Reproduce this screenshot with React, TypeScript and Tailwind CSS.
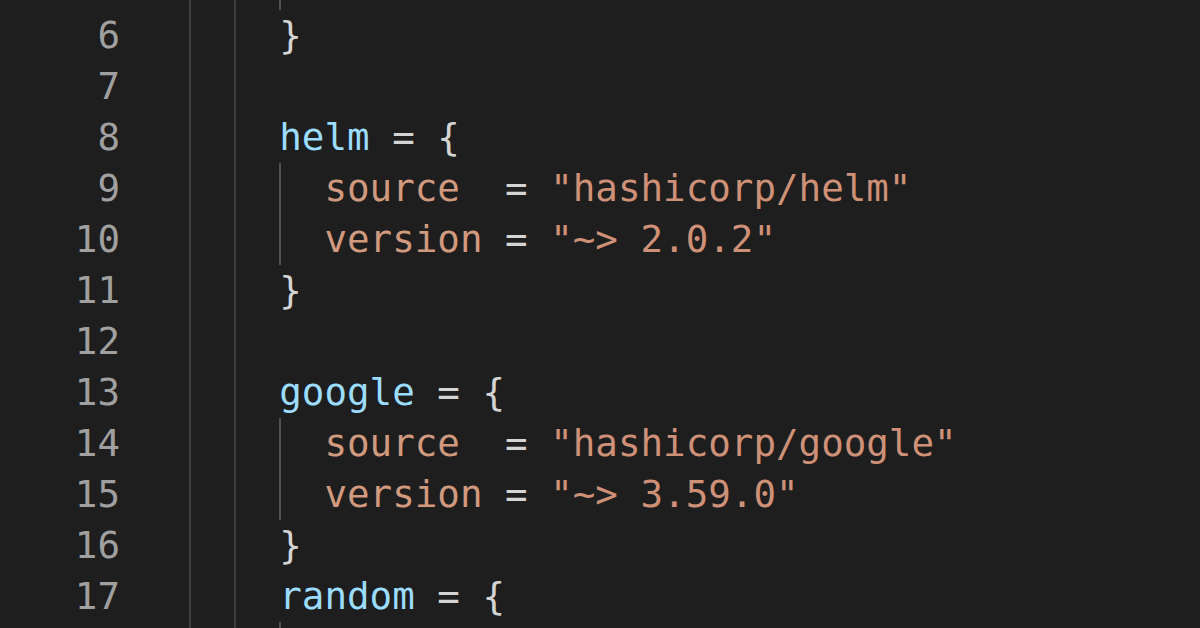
type Tok = { t: string; c: string };

const KEY = "text-[#9cdcfe]";
const ATTR = "text-[#d19a7f]";
const STR = "text-[#ce9178]";
const PUN = "text-[#d4d4d4]";

type Line = { n: number; guides: number; toks: Tok[] };

// line 5 and 18 only show their indent guides, the text is scrolled out of view
const lines: Line[] = [
  { n: 5, guides: 3, toks: [] },
  { n: 6, guides: 2, toks: [{ t: "}", c: PUN }] },
  { n: 7, guides: 2, toks: [] },
  {
    n: 8,
    guides: 2,
    toks: [
      { t: "helm", c: KEY },
      { t: " = {", c: PUN },
    ],
  },
  {
    n: 9,
    guides: 3,
    toks: [
      { t: "source", c: ATTR },
      { t: "  = ", c: PUN },
      { t: '"hashicorp/helm"', c: STR },
    ],
  },
  {
    n: 10,
    guides: 3,
    toks: [
      { t: "version", c: ATTR },
      { t: " = ", c: PUN },
      { t: '"~> 2.0.2"', c: STR },
    ],
  },
  { n: 11, guides: 2, toks: [{ t: "}", c: PUN }] },
  { n: 12, guides: 2, toks: [] },
  {
    n: 13,
    guides: 2,
    toks: [
      { t: "google", c: KEY },
      { t: " = {", c: PUN },
    ],
  },
  {
    n: 14,
    guides: 3,
    toks: [
      { t: "source", c: ATTR },
      { t: "  = ", c: PUN },
      { t: '"hashicorp/google"', c: STR },
    ],
  },
  {
    n: 15,
    guides: 3,
    toks: [
      { t: "version", c: ATTR },
      { t: " = ", c: PUN },
      { t: '"~> 3.59.0"', c: STR },
    ],
  },
  { n: 16, guides: 2, toks: [{ t: "}", c: PUN }] },
  {
    n: 17,
    guides: 2,
    toks: [
      { t: "random", c: KEY },
      { t: " = {", c: PUN },
    ],
  },
  { n: 18, guides: 3, toks: [] },
];

const CodeLine = ({ line, showNum }: { line: Line; showNum: boolean }) => {
  return (
    <div className="flex h-[51px] leading-[51px]">
      <div className="w-[120px] shrink-0 text-right text-[#a0a0a0]">{showNum ? line.n : ""}</div>
      <div className="ml-[69px] flex whitespace-pre">
        {Array.from({ length: line.guides }).map((_, i) => (
          <span
            key={i}
            className={
              i < 2
                ? "w-[2ch] shrink-0 self-stretch border-l-2 border-[#3e3e3e]"
                : "w-[2ch] shrink-0 self-stretch border-l-2 border-[#505050]"
            }
          />
        ))}
        <span>
          {line.toks.map((tok, i) => (
            <span key={i} className={tok.c}>
              {tok.t}
            </span>
          ))}
        </span>
      </div>
    </div>
  );
};

const App = () => {
  return (
    <div className="h-[628px] w-[1200px] overflow-hidden bg-[#1e1e1e] font-['DejaVu_Sans_Mono',monospace] text-[37.5px]">
      <div className="mt-[-41.5px]">
        {lines.map((l) => (
          <CodeLine key={l.n} line={l} showNum={l.n >= 6 && l.n <= 17} />
        ))}
      </div>
    </div>
  );
};

export default App;
